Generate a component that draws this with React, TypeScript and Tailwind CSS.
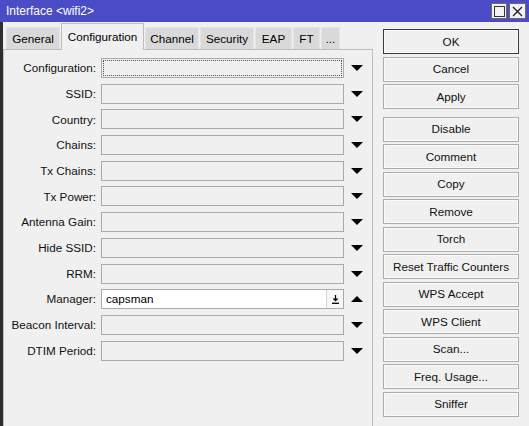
const font = { fontFamily: '"Liberation Sans", Arial, sans-serif' };

const fields = [
  "Configuration",
  "SSID",
  "Country",
  "Chains",
  "Tx Chains",
  "Tx Power",
  "Antenna Gain",
  "Hide SSID",
  "RRM",
  "Manager",
  "Beacon Interval",
  "DTIM Period",
];

const tabs = [
  { name: "General", w: "w-[54px]" },
  { name: "Configuration", w: "w-[83px]" },
  { name: "Channel", w: "w-[54px]" },
  { name: "Security", w: "w-[54px]" },
  { name: "EAP", w: "w-[37px]" },
  { name: "FT", w: "w-[27px]" },
  { name: "...", w: "w-[19px]" },
];

const buttonsTop = ["OK", "Cancel", "Apply"];
const buttonsBottom = [
  "Disable",
  "Comment",
  "Copy",
  "Remove",
  "Torch",
  "Reset Traffic Counters",
  "WPS Accept",
  "WPS Client",
  "Scan...",
  "Freq. Usage...",
  "Sniffer",
];

function Triangle({ up }: { up?: boolean }) {
  return (
    <svg width="12" height="6" viewBox="0 0 12 6">
      <polygon points={up ? "0,6 12,6 6,0" : "0,0 12,0 6,6"} fill="#000" />
    </svg>
  );
}

function FieldRow({ label, index }: { label: string; index: number }) {
  const isManager = label === "Manager";
  const focused = index === 0;
  return (
    <div className="flex items-center h-[20px]">
      <div className="w-[93px] text-right pr-[1px] text-[#111] whitespace-nowrap">{label}:</div>
      <div
        className={`relative ml-[4px] w-[243px] h-[20px] border border-[#a9a9a9] flex items-center ${
          isManager ? "bg-white" : "bg-[#f0f0f0]"
        }`}
      >
        {focused && <div className="absolute inset-[1px] border border-dotted border-[#505050]" />}
        {isManager && (
          <>
            <span className="pl-[4px] flex-1 text-black">capsman</span>
            <div className="w-[17px] h-[18px] border-l border-[#d4d4d4] bg-[#f7f7f7] flex items-center justify-center">
              <svg width="7" height="9" viewBox="0 0 7 9">
                <line x1="3.5" y1="0" x2="3.5" y2="5" stroke="#000" strokeWidth="1.2" />
                <polygon points="0.5,3.5 6.5,3.5 3.5,6.5" fill="#000" />
                <line x1="0" y1="8.3" x2="7" y2="8.3" stroke="#000" strokeWidth="1.3" />
              </svg>
            </div>
          </>
        )}
      </div>
      <div className="w-[26px] flex justify-center">
        <Triangle up={isManager} />
      </div>
    </div>
  );
}

function Button({ label, primary }: { label: string; primary?: boolean }) {
  return (
    <div
      className={`h-[25px] flex items-center justify-center bg-[#f0f0f0] text-[#111] border shadow-[inset_0_0_0_1px_#fbfbfb] ${
        primary ? "border-[#3a3a3a]" : "border-[#acacac]"
      }`}
    >
      {label}
    </div>
  );
}

export default function App() {
  return (
    <div className="w-[529px] h-[426px] overflow-hidden bg-[#f0f0f0] flex flex-col text-[11.7px]" style={font}>
      <div className="h-[22px] bg-[#4b4bc8] flex items-center justify-between pl-[6px] pr-[3px] shrink-0">
        <span className="text-white text-[12px]">Interface &lt;wifi2&gt;</span>
        <div className="flex gap-[2px]">
          <div className="w-[16px] h-[16px] bg-[#f2f2f2] border border-[#6a6a6a] flex items-center justify-center">
            <div className="w-[11px] h-[11px] border border-[#333]" />
          </div>
          <div className="w-[17px] h-[16px] bg-[#f2f2f2] border border-[#6a6a6a] flex items-center justify-center">
            <svg width="11" height="11" viewBox="0 0 11 11">
              <path d="M1 1 L10 10 M10 1 L1 10" stroke="#222" strokeWidth="1.4" />
            </svg>
          </div>
        </div>
      </div>

      <div className="flex flex-1 border-l-[3px] border-[#2e2e2e]">
        <div className="w-[370px] flex flex-col">
          <div className="h-[27px] flex items-end pl-[3px] gap-[1px]">
            {tabs.map((t, i) =>
              i === 1 ? (
                <div
                  key={t.name}
                  className={`${t.w} h-[27px] mb-[-1px] relative z-10 bg-[#f0f0f0] border border-b-0 border-[#bdbdbd] flex justify-center pt-[4px] text-black`}
                >
                  {t.name}
                </div>
              ) : (
                <div
                  key={t.name}
                  className={`${t.w} h-[22px] bg-[#d9d9d9] border border-b-0 border-[#e4e4e4] flex items-center justify-center text-black`}
                >
                  {t.name}
                </div>
              )
            )}
          </div>
          <div className="flex-1 border border-b-0 border-[#bdbdbd] pt-[8px] flex flex-col gap-[5.7px]">
            {fields.map((f, i) => (
              <FieldRow key={f} label={f} index={i} />
            ))}
          </div>
        </div>

        <div className="ml-[10px] w-[136px] pt-[7px] flex flex-col gap-[2.5px]">
          {buttonsTop.map((b, i) => (
            <Button key={b} label={b} primary={i === 0} />
          ))}
          <div className="h-[2.5px]" />
          {buttonsBottom.map((b) => (
            <Button key={b} label={b} />
          ))}
        </div>
      </div>
    </div>
  );
}
